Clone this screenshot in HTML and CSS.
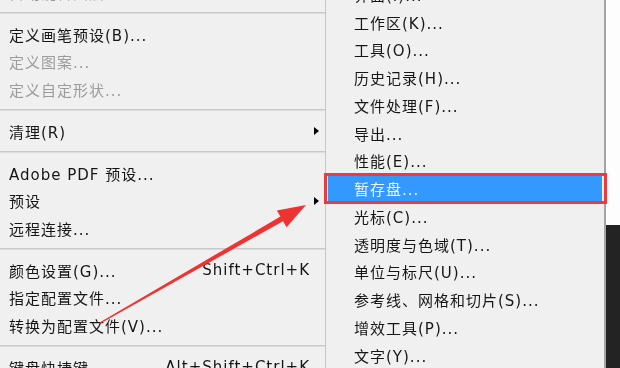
FILE: index.html
```html
<!DOCTYPE html>
<html lang="zh-CN">
<head>
    <meta charset="UTF-8">
    <meta name="viewport" content="width=device-width, initial-scale=1.0">
    <title>编辑 - 首选项</title>
    <link rel="stylesheet" href="styles.css">
</head>
<body>
    <div class="screen">
        <div class="menu main-menu">
            <div class="item off">自动混合图层...</div>
            <div class="sep"></div>
            <div class="item">定义画笔预设(B)...</div>
            <div class="item off">定义图案...</div>
            <div class="item off">定义自定形状...</div>
            <div class="sep"></div>
            <div class="item has-sub">清理(R)</div>
            <div class="sep"></div>
            <div class="item">Adobe PDF 预设...</div>
            <div class="item has-sub">预设</div>
            <div class="item">远程连接...</div>
            <div class="sep"></div>
            <div class="item"><span>颜色设置(G)...</span><span class="key">Shift+Ctrl+K</span></div>
            <div class="item">指定配置文件...</div>
            <div class="item">转换为配置文件(V)...</div>
            <div class="sep"></div>
            <div class="item"><span>键盘快捷键...</span><span class="key">Alt+Shift+Ctrl+K</span></div>
        </div>

        <div class="menu sub-menu">
            <div class="item">界面(I)...</div>
            <div class="item">工作区(K)...</div>
            <div class="item">工具(O)...</div>
            <div class="item">历史记录(H)...</div>
            <div class="item">文件处理(F)...</div>
            <div class="item">导出...</div>
            <div class="item">性能(E)...</div>
            <div class="item active">暂存盘...</div>
            <div class="item">光标(C)...</div>
            <div class="item">透明度与色域(T)...</div>
            <div class="item">单位与标尺(U)...</div>
            <div class="item">参考线、网格和切片(S)...</div>
            <div class="item">增效工具(P)...</div>
            <div class="item">文字(Y)...</div>
        </div>

        <div class="edge">
            <div class="edge-top"></div>
            <div class="edge-bottom"></div>
        </div>
    </div>

    <!-- annotation arrow pointing at the scratch disk entry -->
    <svg class="arrow" width="620" height="368" viewBox="0 0 620 368">
        <polygon points="99.6,322.4 280.4,216.6 276.8,210.6 306,205 286.6,227.2 283,221.2 100.4,323.6"/>
    </svg>
</body>
</html>
```

FILE: styles.css
```css
body {
    margin: 0;
    width: 620px;
    height: 368px;
    overflow: hidden;
    background: #f0f0f0;
    font-family: "DejaVu Sans", "Noto Sans CJK SC", sans-serif;
    font-size: 15px;
    letter-spacing: 1px;
    color: #161616;
}

.screen {
    display: flex;
    height: 368px;
    overflow: hidden;
    filter: blur(0.35px);
}

.menu {
    display: flex;
    flex-direction: column;
    flex-shrink: 0;
    background: #f0f0f0;
}

.main-menu {
    width: 325px;
    margin-top: -21.5px;
    border-right: 1px solid #c6c6c6;
}

.sub-menu {
    width: 278px;
    margin-top: -19.6px;
    border-right: 2px solid #a4a4a4;
}

.item {
    display: flex;
    flex-shrink: 0;
    align-items: center;
    justify-content: space-between;
    white-space: nowrap;
}

.main-menu .item {
    height: 27.5px;
    padding: 0 15px 0 9px;
}

.sub-menu .item {
    height: 27.75px;
    padding-left: 28px;
}

.item.off {
    color: #9c9c9c;
}

.has-sub::after {
    content: "";
    margin-right: -9px;
    border-left: 5px solid #000;
    border-top: 4px solid transparent;
    border-bottom: 4px solid transparent;
}

.sep {
    height: 14.5px;
    flex-shrink: 0;
    display: flex;
    align-items: center;
}

.sep::before {
    content: "";
    flex: 1;
    border-top: 1px solid #c9c9c9;
    border-bottom: 1px solid #dcdcdc;
}

.sub-menu .item.active {
    position: relative;
    margin: 0 2.5px 0 2px;
    padding-left: 26px;
    background: #3399ff;
    color: #eef6ff;
}

.item.active::after {
    content: "";
    position: absolute;
    top: -1.6px;
    bottom: -1.6px;
    left: -4px;
    right: -5.5px;
    border: 3px solid #ee3a3a;
}

.edge {
    width: 14px;
    display: flex;
    flex-direction: column;
}

.edge-top {
    height: 225px;
    background: #fdfdfd;
}

.edge-bottom {
    flex: 1;
    background: #232323;
}

.arrow {
    position: absolute;
    left: 0;
    top: 0;
    pointer-events: none;
}

.arrow polygon {
    fill: #ee3333;
}
```
